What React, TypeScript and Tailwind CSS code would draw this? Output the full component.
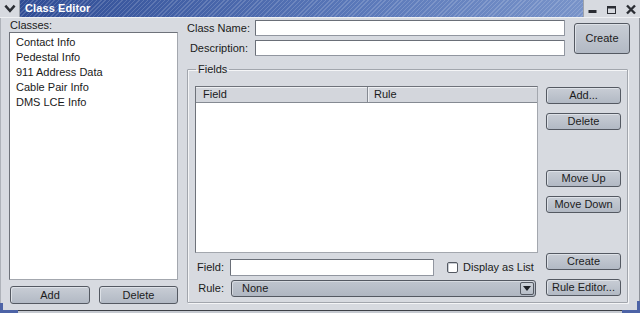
import React from "react";

function Btn({ children, className = "" }: { children: React.ReactNode; className?: string }) {
  return (
    <div
      className={`flex items-center justify-center rounded-[3px] border border-[#545962] bg-[linear-gradient(#c8cdd5,#b2b9c4)] shadow-[inset_1px_1px_0_#dde1e7] text-[11px] leading-none text-[#1c1c1c] ${className}`}
    >
      {children}
    </div>
  );
}

function Input({ className = "" }: { className?: string }) {
  return (
    <div
      className={`bg-white border border-[#9196a0] border-t-[#6a6f78] border-l-[#6a6f78] rounded-[1px] ${className}`}
    />
  );
}

export default function App() {
  const classes = ["Contact Info", "Pedestal Info", "911 Address Data", "Cable Pair Info", "DMS LCE Info"];
  return (
    <div className="relative w-[640px] h-[313px] overflow-hidden bg-[#d7dae0] flex flex-col font-['Liberation_Sans',Arial,sans-serif] text-[11px] text-[#1a1a1a]">
      {/* Title bar */}
      <div className="h-[17px] flex shrink-0">
        <div className="w-[20px] bg-[#d7dae0] flex items-center justify-center border-r border-[#9ea3ab]">
          <svg width="20" height="17" viewBox="0 0 20 17">
            <path d="M6.5 6.5 L10.5 11 L14.5 6.5" fill="none" stroke="#2a2d33" strokeWidth="2.6" strokeLinecap="square" />
          </svg>
        </div>
        <div className="flex-1 flex items-center pl-[5px] [background:repeating-linear-gradient(135deg,rgba(255,255,255,0.16)_0px,rgba(255,255,255,0.16)_1px,transparent_1px,transparent_3px),linear-gradient(90deg,#2f4c95,#5a78b9_60%,#7893c9)]">
          <span className="text-white font-bold text-[11px] leading-none tracking-[0.1px]">Class Editor</span>
        </div>
        <div className="w-[57px] bg-[#d7dae0] flex border-l border-[#9ea3ab]">
          <div className="w-[18px] flex items-center justify-center">
            <svg width="18" height="17" viewBox="0 0 18 17">
              <rect x="4.5" y="10" width="8" height="3" fill="#2a2d33" />
            </svg>
          </div>
          <div className="w-[19px] flex items-center justify-center">
            <svg width="19" height="17" viewBox="0 0 19 17">
              <rect x="5.5" y="6.5" width="8" height="7" fill="none" stroke="#2a2d33" strokeWidth="1" />
              <rect x="5" y="6" width="9" height="2.5" fill="#2a2d33" />
            </svg>
          </div>
          <div className="flex-1 flex items-center justify-center">
            <svg width="20" height="17" viewBox="0 0 20 17">
              <path d="M6 5.5 L14 13.5 M14 5.5 L6 13.5" stroke="#2a2d33" strokeWidth="2.4" />
            </svg>
          </div>
        </div>
      </div>
      <div className="h-px bg-[#eef0f3] shrink-0" />

      {/* Body */}
      <div className="flex-1 flex flex-col border-l border-[#aeb2b9] border-r border-r-[#8e929a]">
        <div className="flex-1 flex pl-[8px] pr-[9px]">
          {/* Left column */}
          <div className="w-[170px] flex flex-col">
            <div className="h-[14px] leading-[14px] pl-[1px]">Classes:</div>
            <div className="h-[248px] bg-white border border-[#6e727a] border-b-[#a3a7ae] border-r-[#a3a7ae] pt-[2px] pl-[6px]">
              {classes.map((c) => (
                <div key={c} className="h-[15px] leading-[15px] whitespace-nowrap">
                  {c}
                </div>
              ))}
            </div>
            <div className="mt-[6px] flex gap-[9px] pl-[1px]">
              <Btn className="w-[80px] h-[18px]">Add</Btn>
              <Btn className="w-[79px] h-[18px]">Delete</Btn>
            </div>
          </div>

          {/* Right column */}
          <div className="flex-1 ml-[9px] flex flex-col">
            <div className="flex pt-[2px]">
              <div className="w-[378px] flex flex-col gap-[4px]">
                <div className="flex items-center h-[16px]">
                  <div className="w-[61px] text-right whitespace-nowrap">Class Name:</div>
                  <Input className="ml-[7px] flex-1 h-[16px]" />
                </div>
                <div className="flex items-center h-[16px]">
                  <div className="w-[61px] text-right whitespace-nowrap">Description:</div>
                  <Input className="ml-[7px] flex-1 h-[16px]" />
                </div>
              </div>
              <Btn className="ml-[9px] mt-[3px] w-[56px] h-[31px]">Create</Btn>
            </div>

            <fieldset className="mt-[7px] mr-[2px] border border-[#a2a6ad] shadow-[inset_1px_1px_0_#f4f5f7,1px_1px_0_#f4f5f7] rounded-[1px] p-0 m-0 min-w-0">
              <legend className="ml-[8px] px-[2px] leading-[13px]">Fields</legend>
              <div className="flex pt-[10px] pl-[7px] pr-[6px] pb-[5px]">
                {/* table + inputs */}
                <div className="flex-1 flex flex-col">
                  <div className="h-[167px] bg-white border border-[#6e727a] border-b-[#a3a7ae] border-r-[#a3a7ae] flex flex-col">
                    <div className="h-[16px] flex bg-[#d3d6dc] border-b border-[#858a92] shadow-[inset_0_1px_0_#eef0f3]">
                      <div className="w-[172px] pl-[7px] leading-[15px] border-r border-[#858a92]">Field</div>
                      <div className="flex-1 pl-[6px] leading-[15px] shadow-[inset_1px_0_0_#eef0f3]">Rule</div>
                    </div>
                  </div>
                  <div className="mt-[6px] h-[17px] flex items-center">
                    <div className="w-[29px] text-right">Field:</div>
                    <Input className="ml-[6px] w-[204px] h-[17px]" />
                    <div className="ml-[13px] w-[11px] h-[11px] bg-white border border-[#545962] rounded-[2px] shadow-[inset_1px_1px_0_#c9cdd4]" />
                    <div className="ml-[5px] whitespace-nowrap">Display as List</div>
                  </div>
                  <div className="mt-[4px] h-[17px] flex items-center">
                    <div className="w-[29px] text-right">Rule:</div>
                    <div className="ml-[7px] mr-[2px] flex-1 h-[17px] rounded-[3px] border border-[#545962] bg-[linear-gradient(#bfc5ce,#b0b7c2)] shadow-[inset_1px_1px_0_#d6dae0] flex items-center">
                      <div className="pl-[10px] flex-1 leading-none">None</div>
                      <div className="w-[14px] h-[13px] mr-[1px] rounded-[2px] border border-[#545962] bg-[linear-gradient(#cdd2d9,#b7bec8)] flex items-center justify-center">
                        <svg width="8" height="5" viewBox="0 0 8 5">
                          <path d="M0 0 L8 0 L4 5 Z" fill="#1e2126" />
                        </svg>
                      </div>
                    </div>
                  </div>
                </div>
                {/* buttons */}
                <div className="ml-[8px] w-[75px] flex flex-col">
                  <Btn className="mt-[1px] h-[17px]">Add...</Btn>
                  <Btn className="mt-[9px] h-[17px]">Delete</Btn>
                  <Btn className="mt-[40px] h-[17px]">Move Up</Btn>
                  <Btn className="mt-[9px] h-[17px]">Move Down</Btn>
                  <Btn className="mt-[40px] h-[17px]">Create</Btn>
                  <Btn className="mt-[9px] h-[17px]">Rule Editor...</Btn>
                </div>
              </div>
            </fieldset>
          </div>
        </div>
        <div className="h-[6px] shrink-0" />
        <div className="h-px bg-[#3c3f45] shrink-0" />
        <div className="h-[3px] bg-[#c6cad1] shrink-0" />
      </div>

      {/* resize grips */}
      <div className="absolute left-0 bottom-0 w-[18px] h-[10px] border-l-[3px] border-b-[3px] border-[#4d63a6]" />
      <div className="absolute right-0 bottom-0 w-[18px] h-[12px] border-r-[3px] border-b-[3px] border-[#4d63a6]" />
    </div>
  );
}
